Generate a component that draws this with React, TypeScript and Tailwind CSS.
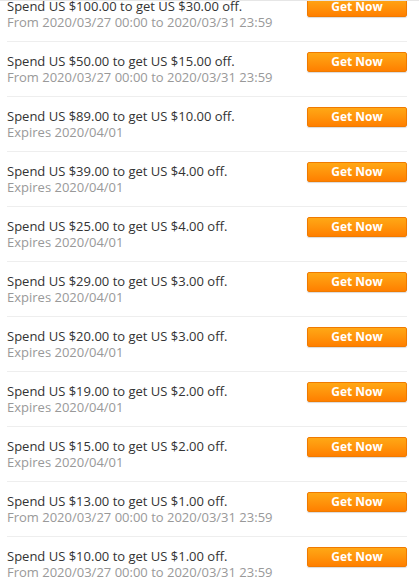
const coupons = [
  { spend: "100.00", off: "30.00", note: "From 2020/03/27 00:00 to 2020/03/31 23:59" },
  { spend: "50.00", off: "15.00", note: "From 2020/03/27 00:00 to 2020/03/31 23:59" },
  { spend: "89.00", off: "10.00", note: "Expires 2020/04/01" },
  { spend: "39.00", off: "4.00", note: "Expires 2020/04/01" },
  { spend: "25.00", off: "4.00", note: "Expires 2020/04/01" },
  { spend: "29.00", off: "3.00", note: "Expires 2020/04/01" },
  { spend: "20.00", off: "3.00", note: "Expires 2020/04/01" },
  { spend: "19.00", off: "2.00", note: "Expires 2020/04/01" },
  { spend: "15.00", off: "2.00", note: "Expires 2020/04/01" },
  { spend: "13.00", off: "1.00", note: "From 2020/03/27 00:00 to 2020/03/31 23:59" },
  { spend: "10.00", off: "1.00", note: "From 2020/03/27 00:00 to 2020/03/31 23:59" },
];

export default function App() {
  return (
    <div className="h-[580px] overflow-hidden bg-white border-t border-[#e6e6e6] font-['Open_Sans',sans-serif]">
      <ul className="-mt-[14px] pl-[7px] pr-[12px]">
        {coupons.map((c, i) => (
          <li key={i} className="flex items-start justify-between py-[11px] border-b border-[#eeeeee]">
            <div className="text-[13px] leading-4">
              <p className="text-[#333333]">
                Spend US ${c.spend} to get US ${c.off} off.
              </p>
              <p className="text-[#999999]">{c.note}</p>
            </div>
            <button className="-mt-px w-[100px] h-[20px] rounded-[2px] border border-[#f07a00] bg-gradient-to-b from-[#ffa815] to-[#ff7f00] text-white text-[12px] font-bold leading-[18px] shadow-[0_1px_1px_rgba(0,0,0,0.15)]">
              Get Now
            </button>
          </li>
        ))}
      </ul>
    </div>
  );
}
